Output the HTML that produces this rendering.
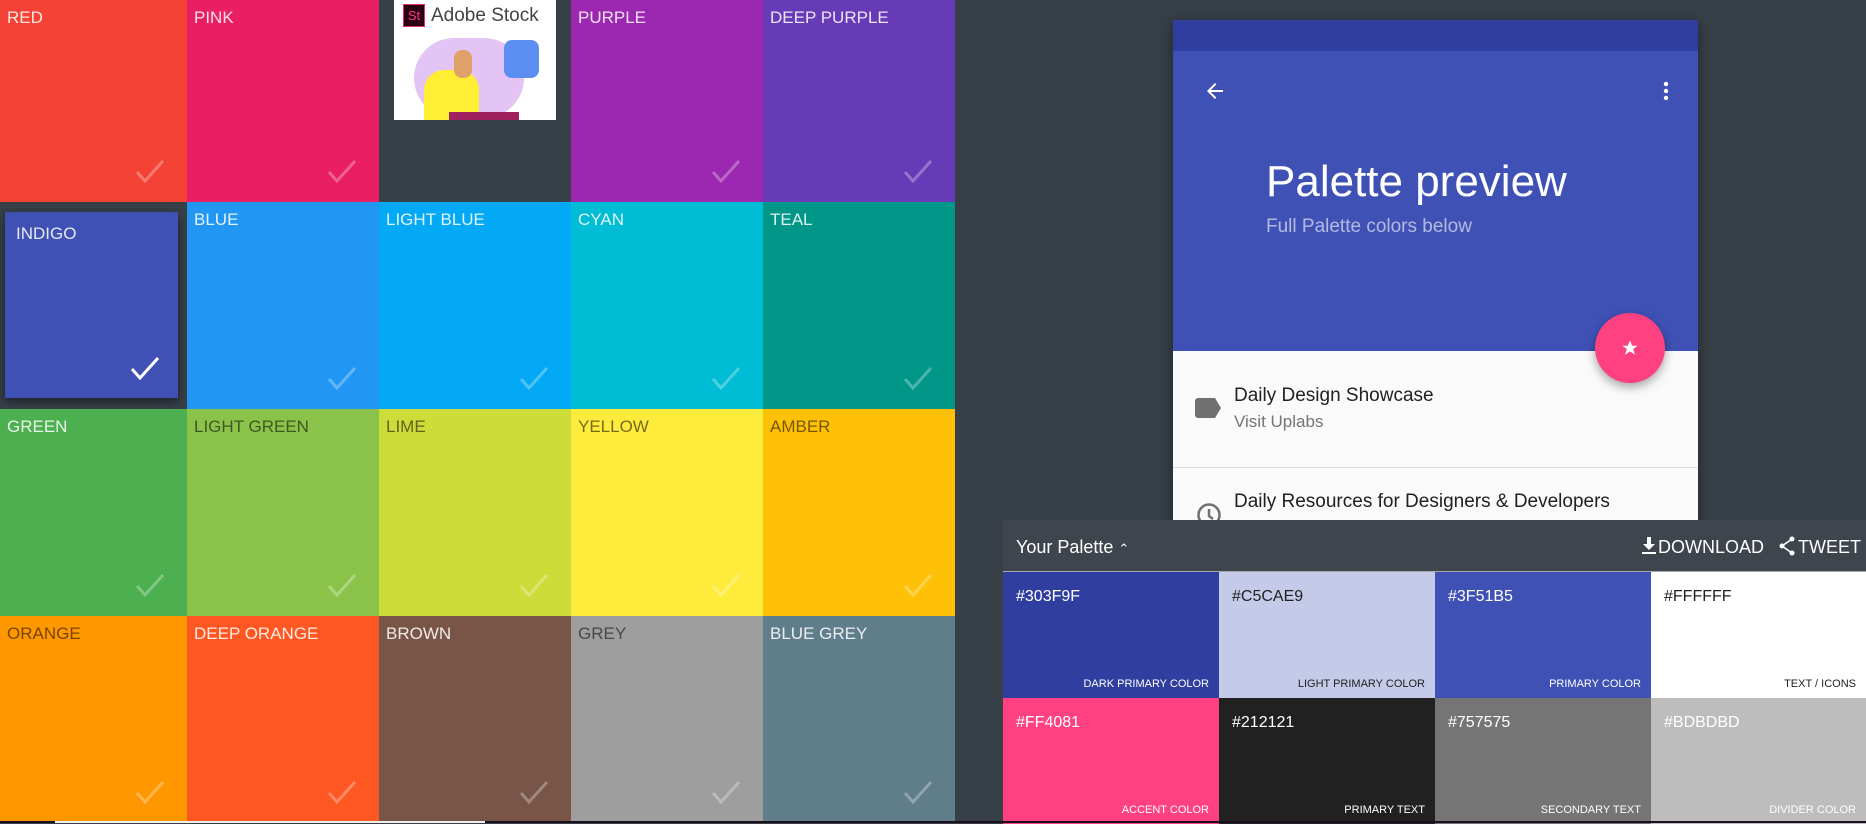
<!DOCTYPE html>
<html><head><meta charset="utf-8"><style>
*{margin:0;padding:0;box-sizing:border-box}
body{width:1866px;height:823px;overflow:hidden;background:#373f47;font-family:"Liberation Sans",sans-serif;position:relative}
.c{position:absolute;overflow:hidden}
.c span{position:absolute;left:7px;top:8px;font-size:17px;color:rgba(255,255,255,.87)}
.c.d span{color:rgba(0,0,0,.55)}
.c svg{position:absolute;right:22px;bottom:19px}
.sw{position:absolute;width:216px;height:126px}
.sw .h{position:absolute;left:13px;top:16px;font-size:16px}
.sw .l{position:absolute;right:10px;bottom:8px;font-size:11px}
</style></head><body>
<div class="c" style="left:0;top:0;width:187px;height:202px;background:#f44336"><span>RED</span><svg width="30" height="24" viewBox="0 0 30 24"><path d="M2 13l8 9L28 2" stroke="rgba(255,255,255,.3)" stroke-width="3" fill="none"/></svg></div>
<div class="c" style="left:187px;top:0;width:192px;height:202px;background:#e91e63"><span>PINK</span><svg width="30" height="24" viewBox="0 0 30 24"><path d="M2 13l8 9L28 2" stroke="rgba(255,255,255,.3)" stroke-width="3" fill="none"/></svg></div>
<div class="c" style="left:394px;top:0;width:162px;height:120px;background:#fff">
 <div style="position:absolute;left:9px;top:4px;width:22px;height:23px;background:#2b0015;border:1px solid #e0336b;color:#ff3d7f;font-size:13px;text-align:center;line-height:21px">St</div>
 <div style="position:absolute;left:37px;top:5px;font-size:19px;color:#444">Adobe Stock</div>
 <div style="position:absolute;left:20px;top:38px;width:110px;height:80px;border-radius:40px;background:#e3c4f5"></div>
 <div style="position:absolute;left:110px;top:40px;width:35px;height:38px;border-radius:8px;background:#5a8ef0"></div>
 <div style="position:absolute;left:30px;top:70px;width:55px;height:50px;border-radius:20px 20px 0 0;background:#ffee33"></div>
 <div style="position:absolute;left:60px;top:50px;width:18px;height:28px;border-radius:8px;background:#e0a06a"></div>
 <div style="position:absolute;left:55px;top:112px;width:70px;height:8px;background:#a02060"></div>
</div>
<div class="c" style="left:571px;top:0;width:192px;height:202px;background:#9c27b0"><span>PURPLE</span><svg width="30" height="24" viewBox="0 0 30 24"><path d="M2 13l8 9L28 2" stroke="rgba(255,255,255,.3)" stroke-width="3" fill="none"/></svg></div>
<div class="c" style="left:763px;top:0;width:192px;height:202px;background:#673ab7"><span>DEEP PURPLE</span><svg width="30" height="24" viewBox="0 0 30 24"><path d="M2 13l8 9L28 2" stroke="rgba(255,255,255,.3)" stroke-width="3" fill="none"/></svg></div>

<div class="c" style="left:5px;top:212px;width:173px;height:186px;background:#3f51b5;box-shadow:0 3px 8px rgba(0,0,0,.5)"><span style="left:11px;top:12px">INDIGO</span><svg width="30" height="24" viewBox="0 0 30 24" style="right:18px;bottom:18px"><path d="M2 13l8 9L28 2" stroke="#fff" stroke-width="3" fill="none"/></svg></div>
<div class="c" style="left:187px;top:202px;width:192px;height:207px;background:#2196f3"><span>BLUE</span><svg width="30" height="24" viewBox="0 0 30 24"><path d="M2 13l8 9L28 2" stroke="rgba(255,255,255,.3)" stroke-width="3" fill="none"/></svg></div>
<div class="c" style="left:379px;top:202px;width:192px;height:207px;background:#03a9f4"><span>LIGHT BLUE</span><svg width="30" height="24" viewBox="0 0 30 24"><path d="M2 13l8 9L28 2" stroke="rgba(255,255,255,.3)" stroke-width="3" fill="none"/></svg></div>
<div class="c" style="left:571px;top:202px;width:192px;height:207px;background:#00bcd4"><span>CYAN</span><svg width="30" height="24" viewBox="0 0 30 24"><path d="M2 13l8 9L28 2" stroke="rgba(255,255,255,.3)" stroke-width="3" fill="none"/></svg></div>
<div class="c" style="left:763px;top:202px;width:192px;height:207px;background:#009688"><span>TEAL</span><svg width="30" height="24" viewBox="0 0 30 24"><path d="M2 13l8 9L28 2" stroke="rgba(255,255,255,.3)" stroke-width="3" fill="none"/></svg></div>

<div class="c" style="left:0;top:409px;width:187px;height:207px;background:#4caf50"><span>GREEN</span><svg width="30" height="24" viewBox="0 0 30 24"><path d="M2 13l8 9L28 2" stroke="rgba(255,255,255,.3)" stroke-width="3" fill="none"/></svg></div>
<div class="c d" style="left:187px;top:409px;width:192px;height:207px;background:#8bc34a"><span>LIGHT GREEN</span><svg width="30" height="24" viewBox="0 0 30 24"><path d="M2 13l8 9L28 2" stroke="rgba(255,255,255,.3)" stroke-width="3" fill="none"/></svg></div>
<div class="c d" style="left:379px;top:409px;width:192px;height:207px;background:#cddc39"><span>LIME</span><svg width="30" height="24" viewBox="0 0 30 24"><path d="M2 13l8 9L28 2" stroke="rgba(255,255,255,.3)" stroke-width="3" fill="none"/></svg></div>
<div class="c d" style="left:571px;top:409px;width:192px;height:207px;background:#ffeb3b"><span>YELLOW</span><svg width="30" height="24" viewBox="0 0 30 24"><path d="M2 13l8 9L28 2" stroke="rgba(255,255,255,.3)" stroke-width="3" fill="none"/></svg></div>
<div class="c d" style="left:763px;top:409px;width:192px;height:207px;background:#ffc107"><span>AMBER</span><svg width="30" height="24" viewBox="0 0 30 24"><path d="M2 13l8 9L28 2" stroke="rgba(255,255,255,.3)" stroke-width="3" fill="none"/></svg></div>

<div class="c d" style="left:0;top:616px;width:187px;height:207px;background:#ff9800"><span>ORANGE</span><svg width="30" height="24" viewBox="0 0 30 24"><path d="M2 13l8 9L28 2" stroke="rgba(255,255,255,.3)" stroke-width="3" fill="none"/></svg></div>
<div class="c" style="left:187px;top:616px;width:192px;height:207px;background:#ff5722"><span>DEEP ORANGE</span><svg width="30" height="24" viewBox="0 0 30 24"><path d="M2 13l8 9L28 2" stroke="rgba(255,255,255,.3)" stroke-width="3" fill="none"/></svg></div>
<div class="c" style="left:379px;top:616px;width:192px;height:207px;background:#795548"><span>BROWN</span><svg width="30" height="24" viewBox="0 0 30 24"><path d="M2 13l8 9L28 2" stroke="rgba(255,255,255,.3)" stroke-width="3" fill="none"/></svg></div>
<div class="c d" style="left:571px;top:616px;width:192px;height:207px;background:#9e9e9e"><span>GREY</span><svg width="30" height="24" viewBox="0 0 30 24"><path d="M2 13l8 9L28 2" stroke="rgba(255,255,255,.3)" stroke-width="3" fill="none"/></svg></div>
<div class="c" style="left:763px;top:616px;width:192px;height:207px;background:#607d8b"><span>BLUE GREY</span><svg width="30" height="24" viewBox="0 0 30 24"><path d="M2 13l8 9L28 2" stroke="rgba(255,255,255,.3)" stroke-width="3" fill="none"/></svg></div>

<div style="position:absolute;left:1173px;top:20px;width:525px;height:520px;background:#fafafa;box-shadow:0 4px 14px rgba(0,0,0,.4)">
 <div style="height:31px;background:#303f9f"></div>
 <div style="position:relative;height:300px;background:#3f51b5">
  <svg style="position:absolute;left:30px;top:28px" width="24" height="24" viewBox="0 0 24 24"><path d="M20 11H7.8l5.6-5.6L12 4l-8 8 8 8 1.4-1.4L7.8 13H20z" fill="#fff"/></svg>
  <svg style="position:absolute;left:481px;top:28px" width="24" height="24" viewBox="0 0 24 24"><circle cx="12" cy="5" r="2.2" fill="#fff"/><circle cx="12" cy="12" r="2.2" fill="#fff"/><circle cx="12" cy="19" r="2.2" fill="#fff"/></svg>
  <div style="position:absolute;left:93px;top:106px;font-size:44px;color:#fff;font-weight:300">Palette preview</div>
  <div style="position:absolute;left:93px;top:165px;font-size:19px;color:rgba(255,255,255,.6)">Full Palette colors below</div>
 </div>
 <div style="position:absolute;left:422px;top:293px;width:70px;height:70px;border-radius:50%;background:#ff4081;box-shadow:0 4px 10px rgba(0,0,0,.35)">
  <svg style="position:absolute;left:26px;top:26px" width="18" height="18" viewBox="0 0 24 24"><path d="M12 2l3 7h7l-5.7 4.3 2.2 7.7L12 16.5 5.5 21l2.2-7.7L2 9h7z" fill="#fff"/></svg>
 </div>
 <svg style="position:absolute;left:22px;top:378px" width="28" height="20" viewBox="0 0 28 20"><path d="M3 0h17l6 10-6 10H3a3 3 0 0 1-3-3V3a3 3 0 0 1 3-3z" fill="#707070"/></svg>
 <div style="position:absolute;left:61px;top:365px;font-size:19px;color:#212121">Daily Design Showcase</div>
 <div style="position:absolute;left:61px;top:392px;font-size:17px;color:#757575">Visit Uplabs</div>
 <div style="position:absolute;left:0;top:447px;width:525px;height:1px;background:#ddd"></div>
 <svg style="position:absolute;left:23px;top:482px" width="26" height="26" viewBox="0 0 26 26"><circle cx="13" cy="13" r="10.5" stroke="#707070" stroke-width="2.5" fill="none"/><path d="M13 7v7l4 3" stroke="#707070" stroke-width="2.5" fill="none"/></svg>
 <div style="position:absolute;left:61px;top:471px;font-size:19px;color:#212121">Daily Resources for Designers &amp; Developers</div>
</div>

<div style="position:absolute;left:1003px;top:520px;width:863px;height:303px;background:#3f454c">
 <div style="position:absolute;left:13px;top:17px;font-size:18px;color:#fff">Your Palette <span style="font-size:13px">&#8963;</span></div>
 <svg style="position:absolute;left:639px;top:17px" width="14" height="18" viewBox="0 0 14 18"><path d="M5 0h4v7h4l-6 6-6-6h4zM0 15h14v2H0z" fill="#fff"/></svg>
 <div style="position:absolute;left:655px;top:17px;font-size:18px;color:#fff">DOWNLOAD</div>
 <svg style="position:absolute;left:776px;top:16px" width="16" height="20" viewBox="0 0 16 20"><circle cx="13" cy="3" r="2.5" fill="#fff"/><circle cx="3" cy="10" r="2.5" fill="#fff"/><circle cx="13" cy="17" r="2.5" fill="#fff"/><path d="M13 3L3 10l10 7" stroke="#fff" stroke-width="1.6" fill="none"/></svg>
 <div style="position:absolute;left:795px;top:17px;font-size:18px;color:#fff">TWEET</div>
 <div style="position:absolute;left:0;top:51px;width:863px;height:1px;background:#aaa"></div>
</div>
<div class="sw" style="left:1003px;top:572px;background:#303f9f;color:#fff"><div class="h">#303F9F</div><div class="l">DARK PRIMARY COLOR</div></div>
<div class="sw" style="left:1219px;top:572px;background:#c5cae9;color:#212121"><div class="h">#C5CAE9</div><div class="l">LIGHT PRIMARY COLOR</div></div>
<div class="sw" style="left:1435px;top:572px;background:#3f51b5;color:#fff"><div class="h">#3F51B5</div><div class="l">PRIMARY COLOR</div></div>
<div class="sw" style="left:1651px;top:572px;width:215px;background:#fff;color:#212121"><div class="h">#FFFFFF</div><div class="l">TEXT / ICONS</div></div>
<div class="sw" style="left:1003px;top:698px;background:#ff4081;color:#fff"><div class="h">#FF4081</div><div class="l">ACCENT COLOR</div></div>
<div class="sw" style="left:1219px;top:698px;background:#212121;color:#fff"><div class="h">#212121</div><div class="l">PRIMARY TEXT</div></div>
<div class="sw" style="left:1435px;top:698px;background:#757575;color:#fff"><div class="h">#757575</div><div class="l">SECONDARY TEXT</div></div>
<div class="sw" style="left:1651px;top:698px;width:215px;background:#bdbdbd;color:#fff"><div class="h">#BDBDBD</div><div class="l">DIVIDER COLOR</div></div>
<div style="position:absolute;left:0;top:821px;width:1866px;height:2px;background:#1a1020"></div>
<div style="position:absolute;left:55px;top:821px;width:430px;height:2px;background:#eee"></div>
</body></html>
